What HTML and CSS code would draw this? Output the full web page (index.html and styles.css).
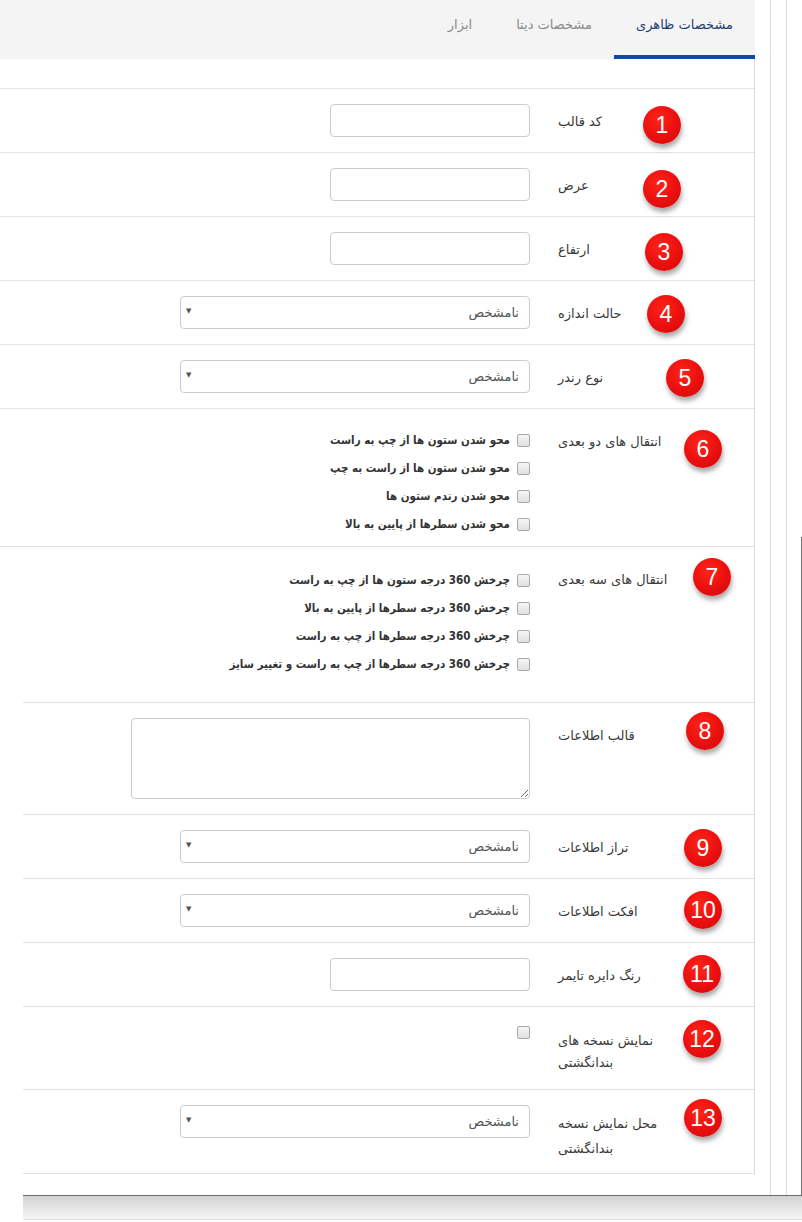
FILE: index.html
```html
<!DOCTYPE html>
<html lang="fa">
	<head>
		<meta charset="UTF-8">
		<title>مشخصات ظاهری</title>
		<link rel="stylesheet" href="styles.css">
	</head>
	<body>
		<div class="frame">
			<div class="shell">
				<div class="shell-inner">
					<div class="tabs">
						<div class="tab active">مشخصات ظاهری</div>
						<div class="tab">مشخصات دیتا</div>
						<div class="tab">ابزار</div>
					</div>
					<div class="panel">
						<div class="row">
							<label class="caption">کد قالب</label>
							<div class="ctrl"><input class="text" type="text"></div>
						</div>
						<div class="row">
							<label class="caption">عرض</label>
							<div class="ctrl"><input class="text" type="text"></div>
						</div>
						<div class="row">
							<label class="caption">ارتفاع</label>
							<div class="ctrl"><input class="text" type="text"></div>
						</div>
						<div class="row">
							<label class="caption">حالت اندازه</label>
							<div class="ctrl"><div class="select"><select><option>نامشخص</option></select></div></div>
						</div>
						<div class="row">
							<label class="caption">نوع رندر</label>
							<div class="ctrl"><div class="select"><select><option>نامشخص</option></select></div></div>
						</div>
						<div class="row row-2d">
							<label class="caption">انتقال های دو بعدی</label>
							<div class="ctrl checks">
								<label class="check"><input type="checkbox"><span>محو شدن ستون ها از چپ به راست</span></label>
								<label class="check"><input type="checkbox"><span>محو شدن ستون ها از راست به چپ</span></label>
								<label class="check"><input type="checkbox"><span>محو شدن رندم ستون ها</span></label>
								<label class="check"><input type="checkbox"><span>محو شدن سطرها از پایین به بالا</span></label>
							</div>
						</div>
						<div class="row row-3d">
							<label class="caption">انتقال های سه بعدی</label>
							<div class="ctrl checks">
								<label class="check"><input type="checkbox"><span>چرخش 360 درجه ستون ها از چپ به راست</span></label>
								<label class="check"><input type="checkbox"><span>چرخش 360 درجه سطرها از پایین به بالا</span></label>
								<label class="check"><input type="checkbox"><span>چرخش 360 درجه سطرها از چپ به راست</span></label>
								<label class="check"><input type="checkbox"><span>چرخش 360 درجه سطرها از چپ به راست و تغییر سایز</span></label>
							</div>
						</div>
						<div class="row lower">
							<label class="caption">قالب اطلاعات</label>
							<div class="ctrl"><textarea class="area"></textarea></div>
						</div>
						<div class="row lower">
							<label class="caption">تراز اطلاعات</label>
							<div class="ctrl"><div class="select"><select><option>نامشخص</option></select></div></div>
						</div>
						<div class="row lower">
							<label class="caption">افکت اطلاعات</label>
							<div class="ctrl"><div class="select"><select><option>نامشخص</option></select></div></div>
						</div>
						<div class="row lower">
							<label class="caption">رنگ دایره تایمر</label>
							<div class="ctrl"><input class="text" type="text"></div>
						</div>
						<div class="row lower row-thumbs">
							<label class="caption">نمایش نسخه های<br>بندانگشتی</label>
							<div class="ctrl single"><input type="checkbox"></div>
						</div>
						<div class="row lower row-last">
							<label class="caption">محل نمایش نسخه<br>بندانگشتی</label>
							<div class="ctrl"><div class="select"><select><option>نامشخص</option></select></div></div>
						</div>
					</div>
				</div>
			</div>
			<div class="footer"></div>

			<span class="badge n1">1</span>
			<span class="badge n2">2</span>
			<span class="badge n3">3</span>
			<span class="badge n4">4</span>
			<span class="badge n5">5</span>
			<span class="badge n6">6</span>
			<span class="badge n7">7</span>
			<span class="badge n8">8</span>
			<span class="badge n9">9</span>
			<span class="badge n10">10</span>
			<span class="badge n11">11</span>
			<span class="badge n12">12</span>
			<span class="badge n13">13</span>
		</div>
	</body>
</html>
```
FILE: styles.css
```css
body {
	margin: 0;
	background: #fff;
	overflow: hidden;
	font-family: "DejaVu Sans", sans-serif;
	font-size: 13px;
	color: #333;
}
.frame {
	position: relative;
	width: 802px;
	height: 1222px;
}
/* dark edge of the lower window */
.frame::after {
	content: "";
	position: absolute;
	left: 801px;
	top: 537px;
	width: 1px;
	height: 658px;
	background: #767676;
}
.shell {
	width: 787px;
	box-sizing: border-box;
	border-right: 1px solid #dcdcdc;
}
.shell-inner {
	width: 771px;
	box-sizing: border-box;
	border-right: 1px solid #dcdcdc;
	padding-bottom: 21px;
}
.tabs {
	display: flex;
	direction: rtl;
	width: 755px;
	height: 59px;
	background: #f4f4f4;
}
.tab {
	padding: 14px 22px 0 22px;
	height: 41px;
	line-height: 22px;
	font-size: 13px;
	color: #8a8a8a;
	border-bottom: 4px solid transparent;
}
.tab.active {
	width: 141px;
	padding: 14px 0 0 0;
	box-sizing: content-box;
	text-align: center;
	color: #1f3d78;
	border-bottom-color: #0f4aa3;
}
.panel {
	width: 755px;
	box-sizing: border-box;
	border-right: 1px solid #dcdcdc;
	padding-top: 29px;
}
.row {
	display: flex;
	direction: rtl;
	align-items: flex-start;
	border-top: 1px solid #e2e2e2;
	padding: 15px 78px 15px 0;
}
.row.lower {
	margin-left: 23px;
}
.caption {
	width: 118px;
	flex: none;
	text-align: left;
	padding-top: 8px;
	line-height: 20px;
	white-space: nowrap;
	color: #3a3a3a;
}
.ctrl {
	margin-right: 28px;
}
input.text {
	display: block;
	width: 200px;
	height: 33px;
	box-sizing: border-box;
	border: 1px solid #cccccc;
	border-radius: 4px;
	margin: 0;
}
.select {
	position: relative;
	width: 350px;
}
.select select {
	appearance: none;
	-webkit-appearance: none;
	display: block;
	width: 350px;
	height: 33px;
	box-sizing: border-box;
	border: 1px solid #cccccc;
	border-radius: 4px;
	background: #fff;
	padding: 0 10px 0 0;
	margin: 0;
	font-family: "DejaVu Sans", sans-serif;
	font-size: 13px;
	color: #555;
	direction: rtl;
}
.select::after {
	content: "\25BC";
	position: absolute;
	left: 6px;
	top: 11px;
	font-size: 7px;
	color: #555;
}
.area {
	display: block;
	width: 399px;
	height: 81px;
	box-sizing: border-box;
	border: 1px solid #cccccc;
	border-radius: 4px;
	margin: 0;
	direction: ltr;
}
input[type="checkbox"] {
	appearance: none;
	-webkit-appearance: none;
	width: 13px;
	height: 13px;
	margin: 0;
	border: 1px solid #a8a8a8;
	border-radius: 2px;
	background: linear-gradient(#f6f6f6, #e0e0e0);
	flex: none;
}
.check {
	display: flex;
	align-items: center;
	gap: 7px;
	height: 28px;
	font-family: "DejaVu Sans Condensed", "DejaVu Sans", sans-serif;
	font-size: 11.5px;
	font-weight: bold;
	color: #333;
	white-space: nowrap;
}
.row-2d .checks {
	padding-top: 2px;
}
.row-2d {
	padding-bottom: 8px;
}
.row-3d .checks {
	padding-top: 4px;
}
.row-3d {
	padding-bottom: 24px;
}
.row-thumbs .caption {
	line-height: 22px;
}
.single {
	padding-top: 4px;
}
.single input {
	display: block;
}
.row-last {
	padding-bottom: 12px;
	border-bottom: 1px solid #e2e2e2;
}
.row-last .caption {
	padding-top: 6px;
	line-height: 25px;
}
.footer {
	margin-left: 23px;
	height: 23px;
	border-top: 1px solid #6c6c6c;
	border-bottom: 1px solid #e0e0e0;
	background: linear-gradient(#d2d2d2, #f6f6f6);
}
.badge {
	position: absolute;
	width: 38px;
	height: 38px;
	border-radius: 50%;
	background: radial-gradient(circle at 42% 35%, #ff2418, #ea0f0f 55%, #cf0909);
	color: #fff;
	font-family: "Liberation Sans", sans-serif;
	font-size: 23px;
	line-height: 38px;
	text-align: center;
	box-shadow: 1px 4px 5px rgba(0, 0, 0, 0.35);
}
.n1 { left: 643px; top: 106px; }
.n2 { left: 643px; top: 170px; }
.n3 { left: 645px; top: 233px; }
.n4 { left: 647px; top: 295px; }
.n5 { left: 666px; top: 359px; }
.n6 { left: 684px; top: 430px; }
.n7 { left: 693px; top: 558px; }
.n8 { left: 686px; top: 712px; }
.n9 { left: 684px; top: 829px; }
.n10 { left: 684px; top: 891px; }
.n11 { left: 683px; top: 955px; }
.n12 { left: 683px; top: 1020px; }
.n13 { left: 684px; top: 1099px; }
```
